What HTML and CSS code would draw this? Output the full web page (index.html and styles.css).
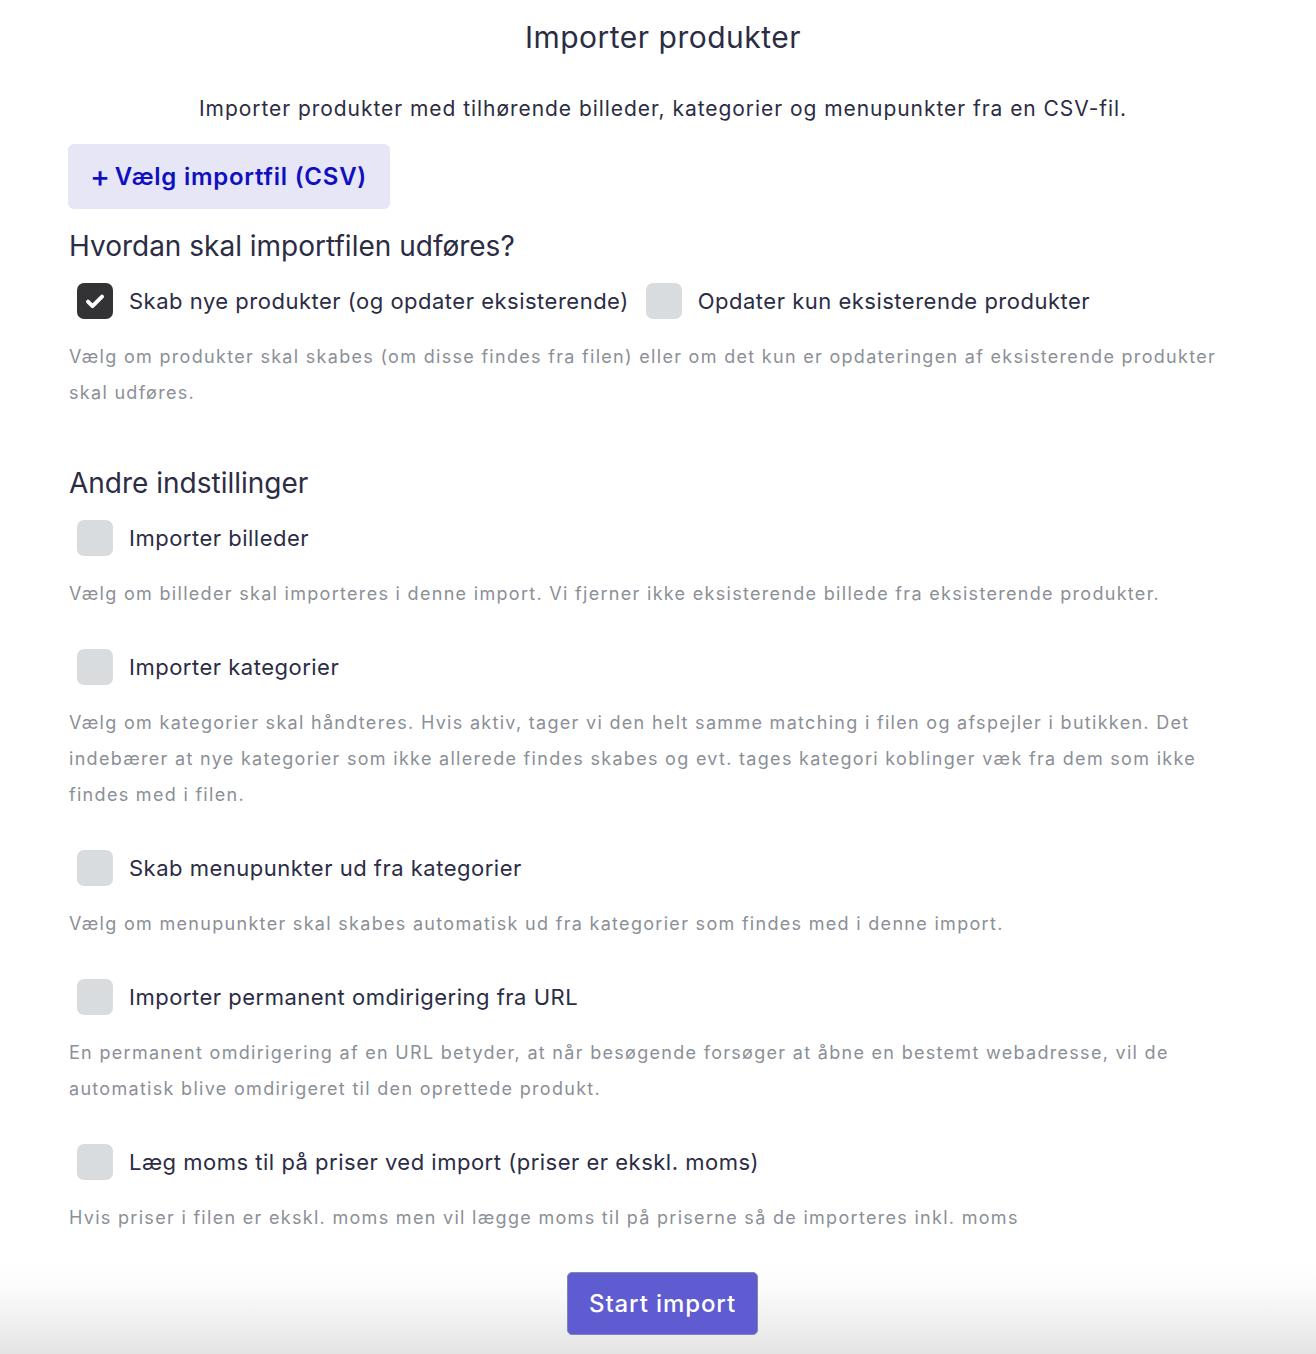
FILE: index.html
```html
<!DOCTYPE html>
<html lang="da">
<head>
<meta charset="utf-8">
<title>Importer produkter</title>
<link rel="stylesheet" href="styles.css">
</head>
<body>
<main class="page">
  <h1 class="title">Importer produkter</h1>
  <p class="subtitle">Importer produkter med tilhørende billeder, kategorier og menupunkter fra en CSV-fil.</p>
  <button class="file-btn" type="button"><span class="plus">+</span>Vælg importfil (CSV)</button>

  <section class="section">
    <h2 class="section-title">Hvordan skal importfilen udføres?</h2>
    <div class="row">
      <label class="check"><span class="box checked"><svg viewBox="0 0 24 24" width="26" height="26"><path d="M5.5 12.5l4.2 4.2L18.5 8" fill="none" stroke="#fff" stroke-width="3.6" stroke-linecap="round" stroke-linejoin="round"/></svg></span><span class="label">Skab nye produkter (og opdater eksisterende)</span></label>
      <label class="check"><span class="box"></span><span class="label">Opdater kun eksisterende produkter</span></label>
    </div>
    <p class="desc">Vælg om produkter skal skabes (om disse findes fra filen) eller om det kun er opdateringen af eksisterende produkter skal udføres.</p>
  </section>

  <section class="section second">
    <h2 class="section-title">Andre indstillinger</h2>
    <div class="option">
      <label class="check"><span class="box"></span><span class="label">Importer billeder</span></label>
      <p class="desc">Vælg om billeder skal importeres i denne import. Vi fjerner ikke eksisterende billede fra eksisterende produkter.</p>
    </div>
    <div class="option">
      <label class="check"><span class="box"></span><span class="label">Importer kategorier</span></label>
      <p class="desc">Vælg om kategorier skal håndteres. Hvis aktiv, tager vi den helt samme matching i filen og afspejler i butikken. Det indebærer at nye kategorier som ikke allerede findes skabes og evt. tages kategori koblinger væk fra dem som ikke findes med i filen.</p>
    </div>
    <div class="option">
      <label class="check"><span class="box"></span><span class="label">Skab menupunkter ud fra kategorier</span></label>
      <p class="desc">Vælg om menupunkter skal skabes automatisk ud fra kategorier som findes med i denne import.</p>
    </div>
    <div class="option">
      <label class="check"><span class="box"></span><span class="label">Importer permanent omdirigering fra URL</span></label>
      <p class="desc">En permanent omdirigering af en URL betyder, at når besøgende forsøger at åbne en bestemt webadresse, vil de automatisk blive omdirigeret til den oprettede produkt.</p>
    </div>
    <div class="option">
      <label class="check"><span class="box"></span><span class="label">Læg moms til på priser ved import (priser er ekskl. moms)</span></label>
      <p class="desc">Hvis priser i filen er ekskl. moms men vil lægge moms til på priserne så de importeres inkl. moms</p>
    </div>
  </section>
</main>
<footer class="footer">
  <button class="start-btn" type="button">Start import</button>
</footer>
</body>
</html>
```
FILE: styles.css
```css
* { box-sizing: border-box; }
html, body { margin: 0; padding: 0; background: #fff; }
body {
  font-family: Inter, "Noto Sans", "Liberation Sans", sans-serif;
  color: #2c2c44;
}
.page {
  padding: 0 68px 0 69px;
}
.title {
  margin: 0;
  padding: 17px 0 0 9px;
  font-size: 30px;
  line-height: 40px;
  font-weight: 400;
  text-align: center;
  letter-spacing: 0.5px;
}
.subtitle {
  margin: 37px 0 0;
  padding-left: 9px;
  font-size: 21px;
  line-height: 30px;
  text-align: center;
  letter-spacing: 0.95px;
}
.file-btn {
  display: flex;
  align-items: center;
  margin: 20px 0 0 -1px;
  height: 65px;
  padding: 0 23px 0 22px;
  border: 0;
  border-radius: 6px;
  background: #e6e6f7;
  color: #1010c0;
  font-family: inherit;
  font-size: 24px;
  font-weight: 600;
  letter-spacing: 0.75px;
}
.plus {
  font-size: 30px;
  font-weight: 500;
  margin-right: 4px;
  line-height: 1;
  position: relative;
  top: -1px;
}
.section-title {
  margin: 0;
  font-size: 28px;
  line-height: 36px;
  font-weight: 400;
}
.section { margin-top: 19px; }
.section.second { margin-top: 54px; }
.row {
  display: flex;
  gap: 17px;
  margin-top: 19px;
}
.check {
  display: flex;
  align-items: center;
  gap: 16px;
  padding-left: 8px;
  height: 36px;
}
.row .check + .check { padding-left: 0; }
.box {
  width: 36px;
  height: 36px;
  border-radius: 7px;
  background: #d9dcdf;
  display: flex;
  align-items: center;
  justify-content: center;
  flex: none;
}
.box.checked { background: #333335; }
.label {
  font-size: 22px;
  line-height: 36px;
  letter-spacing: 0.5px;
}
.desc {
  margin: 20px 0 0;
  font-size: 18px;
  line-height: 36px;
  color: #8b8f97;
  letter-spacing: 1.3px;
}
.option { margin-top: 37px; }
.section.second .option:first-of-type { margin-top: 19px; }
.footer {
  margin-top: 27px;
  height: 92px;
  padding: 9px 0 0 9px;
  display: flex;
  justify-content: center;
  align-items: flex-start;
  background: linear-gradient(#ffffff 0%, #fbfbfb 30%, #e3e3e3 100%);
}
.start-btn {
  width: 191px;
  height: 63px;
  border: 1px solid #7d88b0;
  border-radius: 5px;
  background: #5f5bd1;
  color: #fff;
  font-family: inherit;
  font-size: 24px;
  font-weight: 500;
  letter-spacing: 0.9px;
}
```
